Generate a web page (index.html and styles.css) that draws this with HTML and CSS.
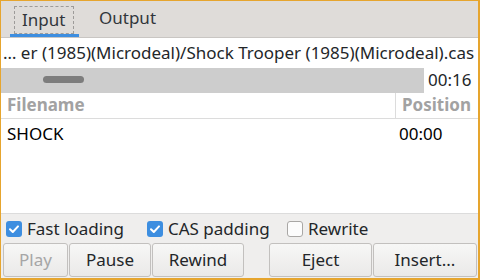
FILE: index.html
```html
<!DOCTYPE html>
<html>
<head>
<meta charset="utf-8">
<link rel="stylesheet" href="styles.css">
</head>
<body>
<div class="win">
  <div class="tabs">
    <div class="tab active"><span class="focus">Input</span></div>
    <div class="tab">Output</div>
  </div>
  <div class="path">… er (1985)(Microdeal)/Shock Trooper (1985)(Microdeal).cas</div>
  <div class="seek">
    <div class="track"><div class="handle"></div></div>
    <div class="time">00:16</div>
  </div>
  <div class="table">
    <div class="row head">
      <div class="c1">Filename</div>
      <div class="c2">Position</div>
    </div>
    <div class="row data">
      <div class="c1">SHOCK</div>
      <div class="c2">00:00</div>
    </div>
  </div>
  <div class="opts">
    <label class="opt o1"><span class="box on"><svg viewBox="0 0 16 16" width="16" height="16"><path d="M4 8.2 L6.8 11 L12 5.4" fill="none" stroke="#fff" stroke-width="2" stroke-linecap="round" stroke-linejoin="round"/></svg></span>Fast loading</label>
    <label class="opt o2"><span class="box on"><svg viewBox="0 0 16 16" width="16" height="16"><path d="M4 8.2 L6.8 11 L12 5.4" fill="none" stroke="#fff" stroke-width="2" stroke-linecap="round" stroke-linejoin="round"/></svg></span>CAS padding</label>
    <label class="opt o3"><span class="box"></span>Rewrite</label>
  </div>
  <div class="buttons">
    <div class="btn b-play disabled">Play</div>
    <div class="btn b-pause">Pause</div>
    <div class="btn b-rewind">Rewind</div>
    <div class="btn b-eject">Eject</div>
    <div class="btn b-insert">Insert...</div>
  </div>
</div>
</body>
</html>
```
FILE: styles.css
```css
html, body {
  margin: 0;
  padding: 0;
}
body {
  font-family: "Noto Sans", "Open Sans", sans-serif;
  font-size: 17px;
  color: #232629;
}
.win {
  width: 480px;
  height: 280px;
  box-sizing: border-box;
  border-style: solid;
  border-color: #e6a52e;
  border-width: 1px 2px 2px 1px;
  background: #efeeed;
  display: flex;
  flex-direction: column;
  overflow: hidden;
}
.tabs {
  height: 36px;
  border-bottom: 1px solid #c9c6c3;
  background: #dfdcd9;
  display: flex;
  flex-shrink: 0;
}
.tab {
  box-sizing: border-box;
  height: 36px;
  padding: 0 20px;
  line-height: 33px;
  color: #31363b;
  white-space: nowrap;
}
.tab.active {
  margin-left: 9px;
  width: 69px;
  padding: 5px 0 0 4px;
  border-bottom: 3px solid #3d8ee0;
}
.focus {
  display: block;
  width: 60px;
  height: 28px;
  box-sizing: border-box;
  border: 1px dashed #9d9b99;
  padding: 0 0 0 7px;
  line-height: 25px;
}
.path {
  height: 30px;
  background: #fff;
  line-height: 29px;
  padding-left: 2px;
  white-space: nowrap;
  overflow: hidden;
  flex-shrink: 0;
}
.seek {
  height: 25px;
  display: flex;
  background: #fff;
  flex-shrink: 0;
}
.track {
  width: 423px;
  height: 25px;
  background: #cdcdcd;
  position: relative;
  flex-shrink: 0;
}
.handle {
  position: absolute;
  left: 42px;
  top: 8px;
  width: 41px;
  height: 7px;
  border-radius: 4px;
  background: #7d7d7d;
}
.time {
  padding-left: 4px;
  line-height: 24px;
}
.table {
  height: 120px;
  background: #fff;
  border-bottom: 1px solid #dcdcdc;
  flex-shrink: 0;
}
.row {
  display: flex;
}
.row.head {
  height: 25px;
  border-bottom: 1px solid #dcdcdc;
  font-weight: bold;
  color: #a2a2a2;
  line-height: 24px;
}
.c1 {
  width: 388px;
  padding-left: 6px;
  flex-shrink: 0;
}
.c2 {
  flex: 1;
  white-space: nowrap;
}
.head .c2 {
  border-left: 1px solid #dcdcdc;
  padding-left: 6px;
}
.row.data {
  height: 30px;
  line-height: 30px;
  color: #000;
}
.data .c2 {
  padding-left: 4px;
}
.opts {
  height: 29px;
  display: flex;
  align-items: center;
  flex-shrink: 0;
}
.opt {
  display: flex;
  align-items: center;
  gap: 5px;
  color: #232629;
  white-space: nowrap;
}
.o1 { margin-left: 5px; width: 141px; }
.o2 { width: 140px; }
.box {
  width: 16px;
  height: 16px;
  box-sizing: border-box;
  border-radius: 3px;
  border: 1px solid #a9a7a5;
  background: #fcfcfc;
  display: block;
  flex-shrink: 0;
}
.box.on {
  border: none;
  background: #3d8ee0;
}
.box svg {
  display: block;
}
.buttons {
  height: 34px;
  display: flex;
  padding-left: 2px;
  gap: 1px;
  flex-shrink: 0;
}
.btn {
  box-sizing: border-box;
  height: 34px;
  border: 1px solid #c2c0be;
  border-radius: 3px;
  background: linear-gradient(#f7f7f6, #eae9e8);
  text-align: center;
  line-height: 31px;
  color: #232629;
  flex-shrink: 0;
}
.btn.disabled { color: #a6a6a6; }
.b-play { width: 65px; }
.b-pause { width: 82px; }
.b-rewind { width: 92px; }
.b-eject { width: 103px; margin-left: 24px; }
.b-insert { width: 104px; }
```
